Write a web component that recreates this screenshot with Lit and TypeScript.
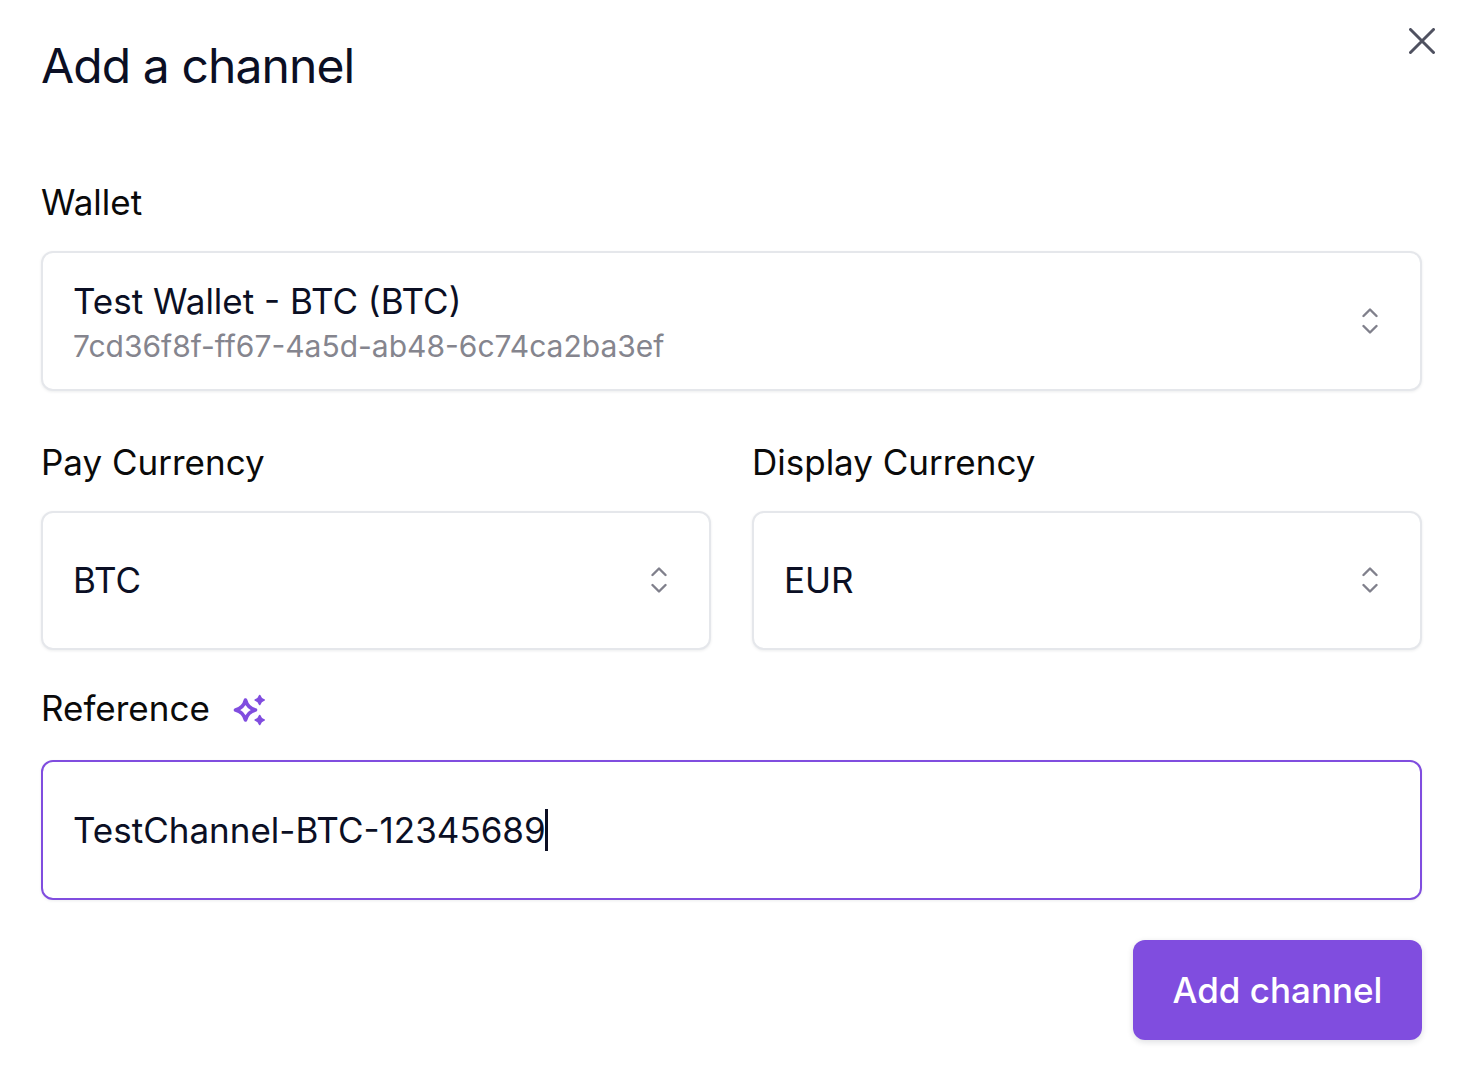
import { LitElement, html, css } from "lit";
import { customElement } from "lit/decorators.js";

const chevrons = html`<svg class="chev" viewBox="0 0 16 28" width="16" height="28" fill="none" stroke="#80808c" stroke-width="2.4" stroke-linecap="round" stroke-linejoin="round"><path d="M1.5 9 8 2.5 14.5 9"/><path d="M1.5 19 8 25.5 14.5 19"/></svg>`;

@customElement("app-root")
export class AppRoot extends LitElement {
  static styles = css`
    :host {
      display: block;
      box-sizing: border-box;
      height: 1085px;
      background: #fff;
      font-family: Inter, "Noto Sans", sans-serif;
      color: #0b0f24;
      padding: 0 43px 0 41px;
      position: relative;
    }
    .close {
      position: absolute;
      left: 1409px;
      top: 28px;
      width: 26px;
      height: 26px;
    }
    h1 {
      margin: 0;
      padding-top: 36px;
      font-size: 48px;
      line-height: 60px;
      font-weight: 400;
      letter-spacing: -0.9px;
      height: 98px;
    }
    .label {
      font-size: 35px;
      line-height: 44px;
      font-weight: 420;
      color: #0a0a0a;
    }
    .wallet-label { margin-top: 46px; padding-bottom: 1px; }
    .field {
      box-sizing: border-box;
      display: flex;
      align-items: center;
      justify-content: space-between;
      border: 2px solid #e5e7eb;
      border-radius: 12px;
      background: #fff;
      box-shadow: 0 1px 3px rgba(16, 24, 40, 0.08);
      padding: 0 42px 0 31px;
      margin-top: 26px;
      height: 140px;
      font-size: 35px;
    }
    .field > span, .main, .value { margin-left: -1px; }
    .stack { display: flex; flex-direction: column; padding-top: 3px; }
    .main { line-height: 44px; }
    .sub {
      font-size: 30px;
      line-height: 40px;
      color: #85858e;
      margin: 3px 0 0 -1px;
    }
    .row {
      display: grid;
      grid-template-columns: 1fr 1fr;
      column-gap: 41px;
      margin-top: 49px;
    }
    .row .label { padding-bottom: 1px; }
    .row .field { height: 139px; padding-bottom: 2px; }
    .row .chev { margin-top: 1px; }
    .ref-label {
      display: flex;
      align-items: center;
      gap: 23px;
      margin-top: 36px;
    }
    .focus {
      border-color: #804ddf;
      margin-top: 30px;
    }
    .value { display: flex; align-items: center; }
    .caret {
      display: inline-block;
      width: 3px;
      height: 42px;
      margin-left: -1px;
      background: #0b0f24;
    }
    .actions {
      display: flex;
      justify-content: flex-end;
      margin-top: 40px;
    }
    button {
      font: inherit;
      font-size: 35px;
      font-weight: 500;
      color: #fff;
      background: #804ddf;
      border: 0;
      border-radius: 12px;
      height: 100px;
      width: 289px;
      padding: 0;
      box-shadow: 0 2px 6px rgba(16, 24, 40, 0.14);
    }
  `;

  render() {
    return html`
      <svg class="close" viewBox="0 0 26 26" fill="none" stroke="#4f5160" stroke-width="3" stroke-linecap="round"><path d="M1.5 1.5 24.5 24.5M24.5 1.5 1.5 24.5"/></svg>
      <h1>Add a channel</h1>
      <div class="label wallet-label">Wallet</div>
      <div class="field">
        <div class="stack">
          <div class="main">Test Wallet - BTC (BTC)</div>
          <div class="sub">7cd36f8f-ff67-4a5d-ab48-6c74ca2ba3ef</div>
        </div>
        ${chevrons}
      </div>
      <div class="row">
        <div>
          <div class="label">Pay Currency</div>
          <div class="field"><span>BTC</span>${chevrons}</div>
        </div>
        <div>
          <div class="label">Display Currency</div>
          <div class="field"><span>EUR</span>${chevrons}</div>
        </div>
      </div>
      <div class="label ref-label">
        <span>Reference</span>
        <svg width="34" height="36" viewBox="0 0 34 36" fill="none">
          <path d="M12.500 10Q14.500 18 22.500 20 14.500 22 12.500 30 10.500 22 2.500 20 10.500 18 12.500 10Z" stroke="#804ddf" stroke-width="3.600" stroke-linejoin="round"/>
          <path d="M26.700 5.500Q27.700 9 31.200 10 27.700 11 26.700 14.500 25.700 11 22.200 10 25.700 9 26.700 5.500ZM26.700 25.500Q27.700 29 31.200 30 27.700 31 26.700 34.500 25.700 31 22.200 30 25.700 29 26.700 25.500Z" fill="#804ddf" stroke="#804ddf" stroke-width="1.600" stroke-linejoin="round"/>
        </svg>
      </div>
      <div class="field focus">
        <div class="value"><span>TestChannel-BTC-12345689</span><span class="caret"></span></div>
      </div>
      <div class="actions"><button>Add channel</button></div>
    `;
  }
}
